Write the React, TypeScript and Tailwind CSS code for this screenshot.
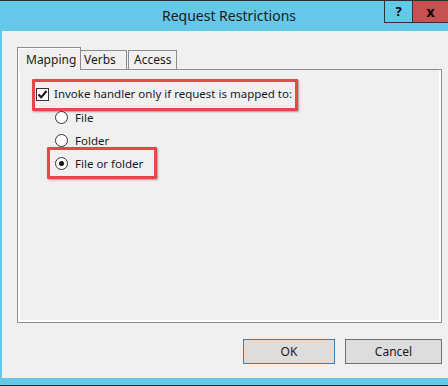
export default function App() {
  return (
    <div className="w-[448px] h-[386px] flex flex-col bg-[#65c8e9] overflow-hidden text-[#1a1a1a] [font-family:'Noto_Sans','Open_Sans',sans-serif]">
      {/* top edge */}
      <div className="h-px bg-[#2e2e2e] shrink-0" />

      {/* Title bar */}
      <div className="relative h-[30px] shrink-0 flex items-center justify-center pl-[10px]">
        <span className="text-[14px] leading-none">Request Restrictions</span>
        <div className="absolute right-0 top-0 flex">
          <div className="w-[29px] h-[22px] border-l border-r border-b border-[#333] flex items-center justify-center text-[13px] font-bold leading-none text-black">
            ?
          </div>
          <div className="w-[35px] h-[22px] bg-[#c75050] border-b border-[#333] flex items-center justify-center text-[14px] font-bold leading-none text-black">
            x
          </div>
        </div>
      </div>

      {/* Body */}
      <div className="flex-1 ml-[2px] bg-[#f0f0f0] pl-[15px] pt-[16px]">
        {/* Tabs */}
        <div className="flex items-end h-[22px] text-[12px]">
          <div className="relative z-10 w-[64px] h-[23px] -mb-px border border-b-0 border-[#8c8c94] bg-[#f0f0f0] shadow-[inset_1px_1px_0_#fff] flex items-start pt-[3px] pl-[8px]">
            Mapping
          </div>
          <div className="w-[46px] h-[19px] border border-l-0 border-b-0 border-[#8c8c94] bg-[#f0f0f0] flex items-center pl-[3px]">
            Verbs
          </div>
          <div className="w-[49px] h-[19px] ml-px border border-b-0 border-[#8c8c94] bg-[#f0f0f0] flex items-center pl-[5px]">
            Access
          </div>
        </div>

        {/* Panel */}
        <div className="w-[425px] h-[254px] border border-[#8c8c94] shadow-[inset_-2px_-2px_0_#fff,inset_2px_0_0_#fff] pt-[14px] pl-[18px] text-[11.5px]">
          <div className="relative flex items-center h-[20px]">
            <span className="absolute left-[-4px] top-[-5px] w-[266px] h-[32px] border-[3px] border-[#e8464a] rounded-[1px] shadow-[1px_1px_2px_rgba(0,0,0,0.35)]" />
            <span className="w-[13px] h-[13px] border border-[#333] bg-white flex items-center justify-center">
              <svg width="11" height="11" viewBox="0 0 11 11">
                <path d="M1.5 5.5 L4.2 8.3 L9.5 2" fill="none" stroke="#111" strokeWidth="2" />
              </svg>
            </span>
            <span className="ml-[5px]">Invoke handler only if request is mapped to:</span>
          </div>

          <div className="ml-[19px] mt-[2px] flex flex-col">
            {[
              { label: "File", checked: false },
              { label: "Folder", checked: false },
              { label: "File or folder", checked: true },
            ].map((r) => (
              <div key={r.label} className="relative flex items-center h-[23px]">
                {r.checked && (
                  <span className="absolute left-[-8px] top-[-5px] w-[110px] h-[32px] border-[3px] border-[#e8464a] rounded-[1px] shadow-[1px_1px_2px_rgba(0,0,0,0.35)]" />
                )}
                <span className="w-[13px] h-[13px] rounded-full border border-[#333] bg-white flex items-center justify-center">
                  {r.checked && <span className="w-[5px] h-[5px] rounded-full bg-[#111]" />}
                </span>
                <span className="ml-[7px]">{r.label}</span>
              </div>
            ))}
          </div>
        </div>

        {/* Buttons */}
        <div className="w-[425px] flex justify-end gap-[10px] mt-[16px] text-[12px]">
          <button className="w-[92px] h-[25px] border border-[#3c7fb1] bg-[#dddddd] flex items-center justify-center">
            OK
          </button>
          <button className="w-[97px] h-[25px] border border-[#707070] bg-[#dddddd] flex items-center justify-center">
            Cancel
          </button>
        </div>
      </div>

      {/* bottom edge */}
      <div className="h-[7px] shrink-0 bg-[#65c8e9]" />
      <div className="h-px shrink-0 bg-[#2e2e2e]" />
    </div>
  );
}
